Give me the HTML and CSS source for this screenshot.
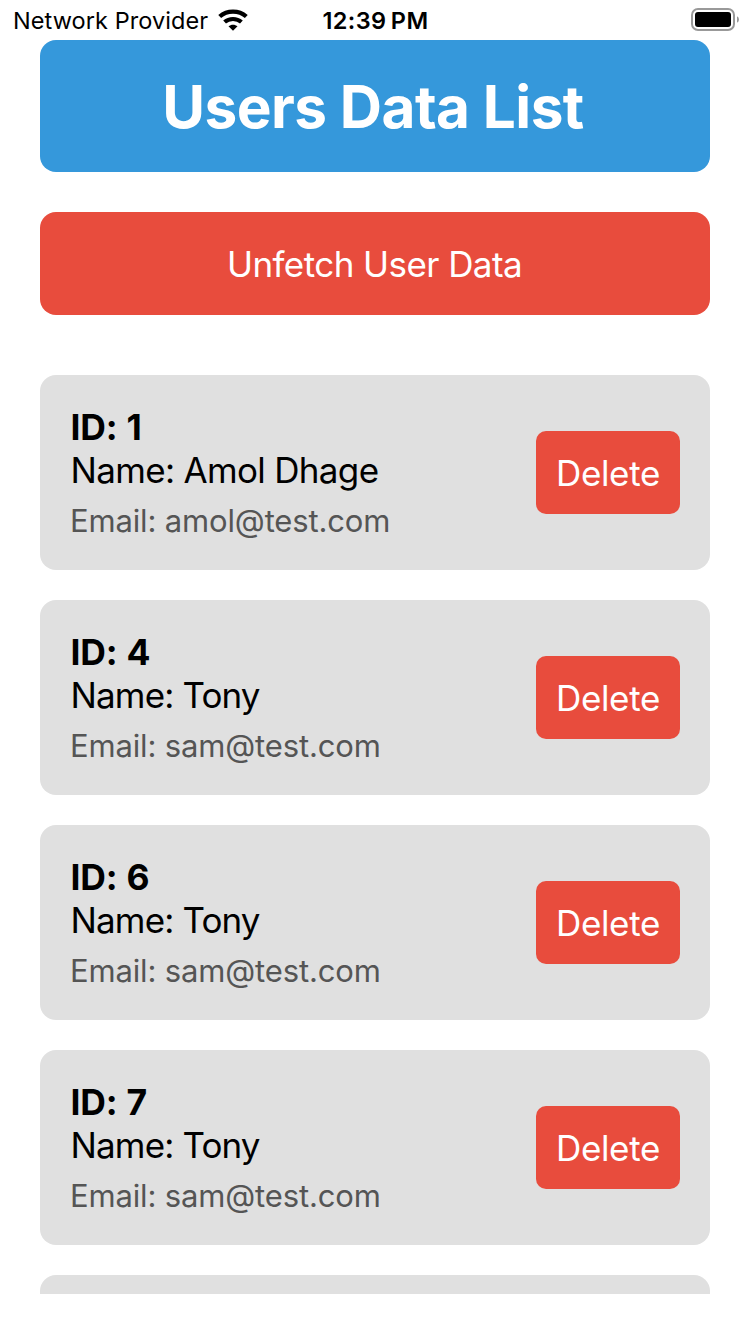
FILE: index.html
```html
<!DOCTYPE html>
<html lang="en">
<head>
<meta charset="utf-8">
<title>Users Data List</title>
<link rel="stylesheet" href="styles.css">
</head>
<body>
<div class="status">
  <div class="carrier"><span class="carrier-name">Network Provider</span>
    <svg class="wifi" width="30" height="22" viewBox="0 0 30 22"><path d="M1.700 7.500C9.200 .9 20.800 .9 28.300 7.500" fill="none" stroke="#000" stroke-width="4.300"/><path d="M6.600 13.100C11.200 8.900 18.800 8.900 23.400 13.100" fill="none" stroke="#000" stroke-width="4.100"/><path d="M15 21.800l-4.500-4.500c2.500-2.200 6.500-2.200 9 0z"/></svg>
  </div>
  <div class="time">12:39 PM</div>
  <svg class="battery" width="50" height="24" viewBox="0 0 50 24"><rect x="1" y="1" width="42" height="21" rx="6" fill="none" stroke="#999" stroke-width="2"/><rect x="4" y="4" width="36" height="15" rx="3"/><path d="M46 8.200q2 1 2 3.300t-2 3.300z" fill="#999"/></svg>
</div>
<main class="app">
  <h1 class="title"><span class="title-text">Users Data List</span></h1>
  <button class="fetch"><span class="fetch-text">Unfetch User Data</span></button>
  <div class="list">
    <article class="card"><div class="info"><div class="id">ID: 1</div><div class="name name-full">Name: Amol Dhage</div><div class="email">Email: amol@test.com</div></div><button class="delete">Delete</button></article>
    <article class="card"><div class="info"><div class="id">ID: 4</div><div class="name">Name: Tony</div><div class="email">Email: sam@test.com</div></div><button class="delete">Delete</button></article>
    <article class="card"><div class="info"><div class="id">ID: 6</div><div class="name">Name: Tony</div><div class="email">Email: sam@test.com</div></div><button class="delete">Delete</button></article>
    <article class="card"><div class="info"><div class="id">ID: 7</div><div class="name">Name: Tony</div><div class="email">Email: sam@test.com</div></div><button class="delete">Delete</button></article>
    <article class="card"></article>
  </div>
</main>
</body>
</html>
```
FILE: styles.css
```css
* { box-sizing: border-box; }
body { margin: 0; height: 1334px; overflow: hidden; background: #fff; color: #000; font-family: Inter, Roboto, sans-serif; }
button { border: 0; padding: 0; font-family: inherit; color: #fff; background: #e84c3d; }
.status { height: 40px; display: grid; grid-template-columns: 1fr auto 1fr; align-items: center; padding: 0 9px 0 13px; white-space: nowrap; }
.carrier { display: flex; align-items: center; gap: 10px; font-size: 23.5px; letter-spacing: .08px; }
.time { font-size: 23.5px; font-weight: 600; letter-spacing: .4px; word-spacing: -2px; padding: 1px 3px 0 0; }
.battery { justify-self: end; }
.app { height: 1254px; padding: 0 40px; overflow: hidden; }
.title { margin: 0 0 40px; height: 132px; padding: 1px 4px 0 0; border-radius: 16px; background: #3598db; color: #fff; display: flex; align-items: center; justify-content: center; font-size: 58.5px; font-weight: 700; letter-spacing: -.55px; }
.fetch { display: flex; align-items: center; justify-content: center; width: 100%; height: 103px; padding: 1px 1px 0 0; border-radius: 16px; font-size: 35px; letter-spacing: -.57px; }
.list { display: flex; flex-direction: column; gap: 30px; margin-top: 60px; }
.card { flex: none; height: 195px; border-radius: 16px; background: #e0e0e0; padding: 30px; display: flex; align-items: center; justify-content: space-between; }
.info { white-space: nowrap; }
.id { font-size: 35.5px; line-height: 43px; font-weight: 700; letter-spacing: -.2px; word-spacing: 1px; padding-left: .5px; }
.name { font-size: 35px; line-height: 43px; letter-spacing: -.85px; padding-left: .5px; }
.name-full { letter-spacing: -.67px; }
.email { margin-top: 10px; font-size: 31px; line-height: 38px; color: #555; letter-spacing: -.15px; }
.delete { width: 144px; height: 83px; border-radius: 10px; font-size: 35px; letter-spacing: -.35px; }
```
